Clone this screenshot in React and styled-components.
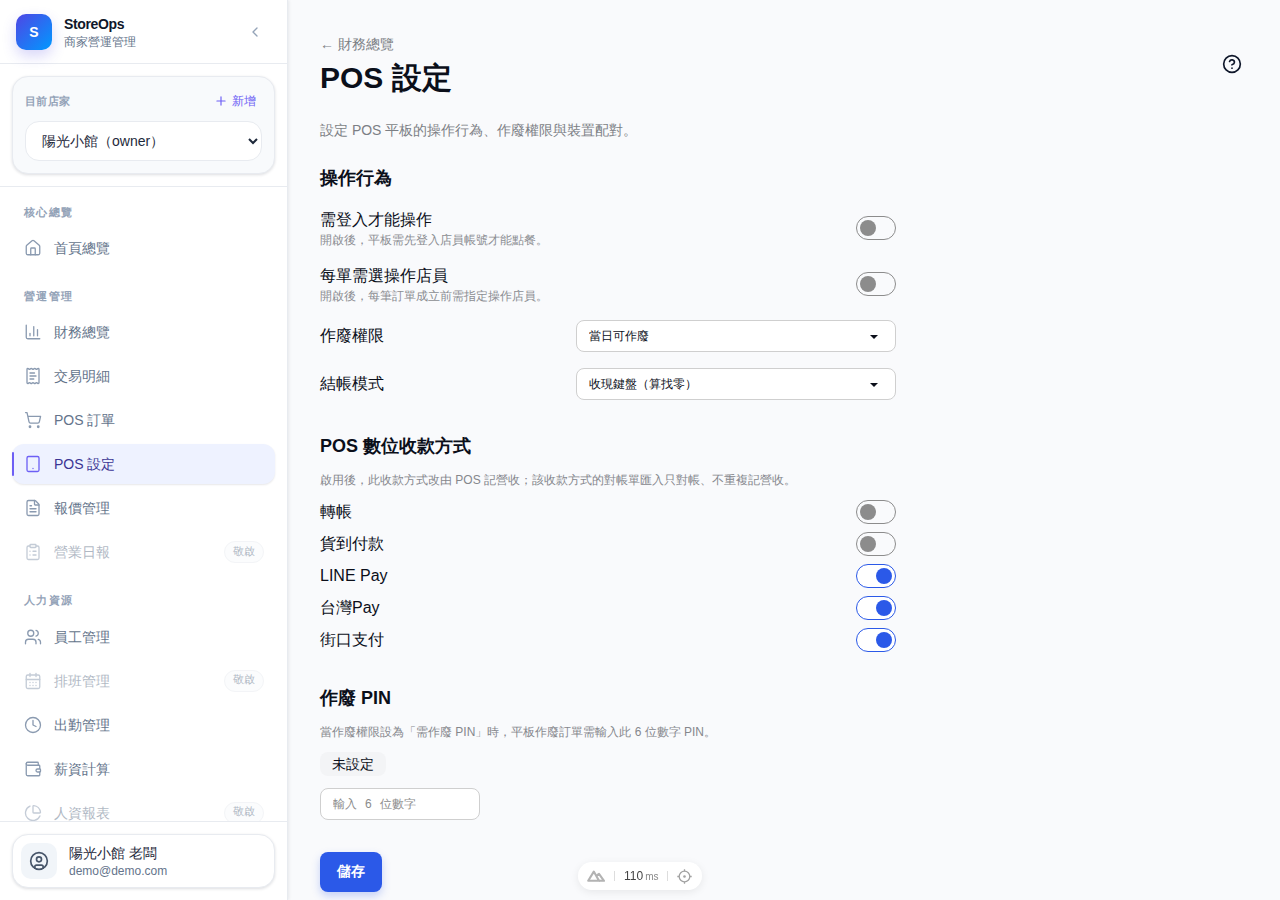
import styled, { createGlobalStyle } from "styled-components";
import {
  House,
  ChartColumn,
  ReceiptText,
  ShoppingCart,
  Tablet,
  FileText,
  ClipboardList,
  Users,
  CalendarDays,
  Clock,
  Wallet,
  ChartPie,
  CircleUser,
  CircleHelp,
  ChevronLeft,
  Plus,
} from "lucide-react";

const GlobalStyle = createGlobalStyle`
  * { box-sizing: border-box; }
  html, body { margin: 0; height: 100%; overflow: hidden; }
  body {
    font-family: "Liberation Sans", sans-serif;
    background: #f9fafc;
    color: #0b0f1a;
  }
`;

const Layout = styled.div`
  display: flex;
  height: 100vh;
`;

const Sidebar = styled.aside`
  width: 288px;
  flex-shrink: 0;
  display: flex;
  flex-direction: column;
  background: #fff;
  border-right: 1px solid #e8ebf0;
  box-shadow: 1px 0 3px rgba(15, 23, 42, 0.08);
  z-index: 2;
`;

const Brand = styled.div`
  height: 64px;
  flex-shrink: 0;
  display: flex;
  align-items: center;
  gap: 12px;
  padding: 0 16px;
  border-bottom: 1px solid #e8ebf0;
`;

const Logo = styled.div`
  width: 36px;
  height: 36px;
  border-radius: 10px;
  display: flex;
  align-items: center;
  justify-content: center;
  color: #fff;
  font-size: 14px;
  font-weight: 700;
  background: linear-gradient(135deg, #4f46e5, #0099ff);
  box-shadow: 0 6px 14px rgba(79, 70, 229, 0.22);
`;

const BrandText = styled.div`
  flex: 1;
  min-width: 0;
  padding-top: 2px;
`;

const BrandName = styled.div`
  font-size: 14px;
  line-height: 18px;
  font-weight: 700;
  letter-spacing: -0.35px;
  color: #0f172a;
`;

const BrandSub = styled.div`
  font-size: 12px;
  line-height: 18px;
  color: #64748b;
`;

const Collapse = styled.button`
  width: 24px;
  height: 24px;
  margin-right: 4px;
  padding: 0;
  border: none;
  background: none;
  color: #94a3b8;
  display: flex;
  align-items: center;
  justify-content: center;
`;

const StoreArea = styled.div`
  height: 123px;
  flex-shrink: 0;
  padding: 12px;
  border-bottom: 1px solid #e8ebf0;
`;

const StoreCard = styled.div`
  height: 98px;
  padding: 12px;
  background: #f8fafc;
  border: 1px solid #e8ebf0;
  border-radius: 16px;
  box-shadow: 0 1px 3px rgba(15, 23, 42, 0.14);
`;

const StoreHead = styled.div`
  height: 24px;
  display: flex;
  align-items: center;
  justify-content: space-between;
  padding-right: 6px;
  margin-bottom: 8px;
`;

const StoreLabel = styled.span`
  font-size: 11px;
  font-weight: 700;
  letter-spacing: 0.3px;
  color: #94a3b8;
`;

const AddStore = styled.button`
  display: flex;
  align-items: center;
  gap: 4px;
  padding: 0;
  border: none;
  background: none;
  font-family: inherit;
  font-size: 12px;
  color: #6d5ff5;
`;

const StoreSelect = styled.select`
  width: 100%;
  height: 40px;
  padding: 0 12px;
  border: 1px solid #e8ebf0;
  border-radius: 14px;
  background: #fff;
  font-family: inherit;
  font-size: 14px;
  color: #1e293b;
`;

const Nav = styled.nav`
  flex: 1;
  min-height: 0;
  overflow: hidden;
  padding: 17px 12px 0;
`;

const Group = styled.div`
  margin-bottom: 20px;
`;

const GroupLabel = styled.div`
  height: 16.2px;
  margin-bottom: 8px;
  padding-left: 12px;
  font-size: 11px;
  line-height: 17px;
  font-weight: 700;
  letter-spacing: 1.3px;
  color: #94a3b8;
`;

const NavItem = styled.a`
  position: relative;
  height: 40px;
  margin-bottom: 4px;
  display: flex;
  align-items: center;
  gap: 12px;
  padding: 0 11px 0 12px;
  border-radius: 12px;
  font-size: 14px;
  color: ${(p) => (p.$active ? "#3b3594" : "#64748b")};
  background: ${(p) => (p.$active ? "#eef2ff" : "transparent")};
  box-shadow: ${(p) => (p.$active ? "0 1px 2px rgba(15, 23, 42, 0.1)" : "none")};
  opacity: ${(p) => (p.$disabled ? 0.5 : 1)};

  svg {
    flex-shrink: 0;
    color: ${(p) => (p.$active ? "#6d5ff5" : "#8a9ab0")};
  }
`;

const ActiveMark = styled.span`
  position: absolute;
  left: 0;
  top: 8px;
  bottom: 8px;
  width: 2px;
  background: #6d5ff5;
  border-radius: 2px;
`;

const NavText = styled.span`
  flex: 1;
  padding-top: 2px;
`;

const Soon = styled.span`
  height: 22px;
  padding: 0 8px 2px;
  display: flex;
  align-items: center;
  border: 1px solid #e8ebf0;
  border-radius: 11px;
  background: #f8fafc;
  font-size: 11px;
  color: #64748b;
`;

const UserArea = styled.div`
  height: 79px;
  flex-shrink: 0;
  padding: 12px;
  border-top: 1px solid #e8ebf0;
  background: #fff;
`;

const UserCard = styled.div`
  height: 54px;
  display: flex;
  align-items: center;
  gap: 12px;
  padding: 0 8px;
  border: 1px solid #e8ebf0;
  border-radius: 16px;
  background: #fff;
  box-shadow: 0 1px 3px rgba(15, 23, 42, 0.14);
`;

const Avatar = styled.div`
  width: 36px;
  height: 36px;
  border-radius: 10px;
  background: #f1f5f9;
  color: #475569;
  display: flex;
  align-items: center;
  justify-content: center;
`;

const UserName = styled.div`
  font-size: 14px;
  line-height: 20px;
  color: #1e293b;
`;

const UserMail = styled.div`
  font-size: 12px;
  line-height: 16px;
  color: #64748b;
`;

const Main = styled.main`
  flex: 1;
  min-width: 0;
  overflow: hidden;
  padding: 36px 32px 0;
`;

const PageHead = styled.header`
  display: flex;
  justify-content: space-between;
  align-items: flex-start;
`;

const BackLink = styled.a`
  display: block;
  font-size: 14px;
  line-height: 17px;
  color: #7c7f85;
`;

const Title = styled.h1`
  margin: 5px 0 0;
  font-size: 30px;
  line-height: 40px;
  font-weight: 700;
  color: #0b0f1a;
`;

const HelpButton = styled.button`
  width: 20px;
  height: 20px;
  margin: 18px 6px 0 0;
  padding: 0;
  border: none;
  background: none;
  color: #0f172a;
`;

const Intro = styled.p`
  margin: 24px 0 0;
  font-size: 14px;
  line-height: 17px;
  color: #7c7f85;
`;

const Form = styled.div`
  width: 576px;
`;

const Section = styled.section`
  margin-top: ${(p) => p.$top}px;
`;

const SectionTitle = styled.h2`
  margin: 0;
  font-size: 18px;
  line-height: 28px;
  font-weight: 700;
  color: #0b0f1a;
`;

const SectionNote = styled.p`
  margin: 12px 0 0;
  font-size: 12px;
  line-height: 16px;
  color: #85878c;
`;

const Stack = styled.div`
  margin-top: ${(p) => p.$top}px;
  display: flex;
  flex-direction: column;
  gap: ${(p) => p.$gap}px;
`;

const Row = styled.div`
  display: flex;
  align-items: center;
  justify-content: space-between;
`;

const RowLabel = styled.div`
  font-size: 16px;
  line-height: 24px;
  color: #0b0f1a;
`;

const RowHint = styled.div`
  font-size: 12px;
  line-height: 16px;
  color: #8b8d92;
`;

const Toggle = styled.span`
  position: relative;
  width: 40px;
  height: 24px;
  flex-shrink: 0;
  border-radius: 12px;
  border: 1px solid ${(p) => (p.$on ? "#2b59e8" : "#8c8c8c")};
  background: ${(p) => (p.$on ? "#fff" : "transparent")};

  &::after {
    content: "";
    position: absolute;
    top: 3px;
    left: ${(p) => (p.$on ? "19px" : "3px")};
    width: 16px;
    height: 16px;
    border-radius: 50%;
    background: ${(p) => (p.$on ? "#2b59e8" : "#8c8c8c")};
  }
`;

const SelectWrap = styled.div`
  position: relative;
  width: 320px;

  &::after {
    content: "";
    position: absolute;
    right: 18px;
    top: 15px;
    border-left: 4px solid transparent;
    border-right: 4px solid transparent;
    border-top: 4px solid #0b0f1a;
    pointer-events: none;
  }
`;

const Select = styled.select`
  display: block;
  width: 100%;
  height: 32px;
  padding: 0 12px;
  appearance: none;
  border: 1px solid #cfcfcf;
  border-radius: 8px;
  background: #fff;
  font-family: inherit;
  font-size: 12px;
  color: #0b0f1a;
`;

const PinBadge = styled.div`
  width: fit-content;
  height: 24px;
  margin-top: 12px;
  padding: 2px 12px 0;
  display: flex;
  align-items: center;
  border-radius: 8px;
  background: #f3f4f6;
  font-size: 14px;
  color: #0b0f1a;
`;

const PinInput = styled.input`
  display: block;
  width: 160px;
  height: 32px;
  margin-top: 12px;
  padding: 0 12px;
  border: 1px solid #cfcfcf;
  border-radius: 8px;
  background: #fff;
  font-family: inherit;
  font-size: 12px;

  &::placeholder {
    color: #8b8b8b;
    word-spacing: 4.7px;
  }
`;

const SaveButton = styled.button`
  display: block;
  width: 62px;
  height: 40px;
  margin-top: 32px;
  border: none;
  border-radius: 8px;
  background: #2b59e8;
  color: #fff;
  font-family: inherit;
  font-size: 14px;
  font-weight: 700;
  box-shadow: 0 4px 8px rgba(43, 89, 232, 0.25);
`;

const DevPill = styled.div`
  position: fixed;
  left: 578px;
  top: 862px;
  width: 124px;
  height: 28px;
  display: flex;
  align-items: center;
  gap: 9px;
  padding: 0 9px;
  border-radius: 14px;
  background: #fff;
  box-shadow: 0 2px 8px rgba(0, 0, 0, 0.08);
  z-index: 5;
`;

const DevDivider = styled.span`
  width: 1px;
  height: 10px;
  background: #ddd;
`;

const DevTime = styled.span`
  font-size: 12px;
  white-space: nowrap;
  color: #444;

  small {
    margin-left: 2px;
    font-size: 10px;
    color: #888;
  }
`;

const navGroups = [
  {
    label: "核心總覽",
    items: [{ label: "首頁總覽", icon: House }],
  },
  {
    label: "營運管理",
    items: [
      { label: "財務總覽", icon: ChartColumn },
      { label: "交易明細", icon: ReceiptText },
      { label: "POS 訂單", icon: ShoppingCart },
      { label: "POS 設定", icon: Tablet, active: true },
      { label: "報價管理", icon: FileText },
      { label: "營業日報", icon: ClipboardList, soon: true },
    ],
  },
  {
    label: "人力資源",
    items: [
      { label: "員工管理", icon: Users },
      { label: "排班管理", icon: CalendarDays, soon: true },
      { label: "出勤管理", icon: Clock },
      { label: "薪資計算", icon: Wallet },
      { label: "人資報表", icon: ChartPie, soon: true },
    ],
  },
];

const payments = [
  { label: "轉帳", on: false },
  { label: "貨到付款", on: false },
  { label: "LINE Pay", on: true },
  { label: "台灣Pay", on: true },
  { label: "街口支付", on: true },
];

function MountainLogo() {
  return (
    <svg width="18" height="12" viewBox="0 0 18 12" fill="none" stroke="#b3b3b3" strokeWidth="2.1" strokeLinejoin="round">
      <path d="M1.2 10.8 L6.8 1.6 L12 10.8 Z" />
      <path d="M9.5 5.6 L12 3.8 L17 10.8 H12" />
    </svg>
  );
}

function TargetIcon() {
  return (
    <svg width="15" height="15" viewBox="0 0 15 15" fill="none" stroke="#a3a3a3" strokeWidth="1.3">
      <circle cx="7.5" cy="7.5" r="5.3" />
      <circle cx="7.5" cy="7.5" r="1.3" fill="#a3a3a3" stroke="none" />
      <path d="M7.5 0.3V2.3M7.5 12.7V14.7M0.3 7.5H2.3M12.7 7.5H14.7" />
    </svg>
  );
}

export default function App() {
  return (
    <>
      <GlobalStyle />
      <Layout>
        <Sidebar>
          <Brand>
            <Logo>S</Logo>
            <BrandText>
              <BrandName>StoreOps</BrandName>
              <BrandSub>商家營運管理</BrandSub>
            </BrandText>
            <Collapse>
              <ChevronLeft size={16} />
            </Collapse>
          </Brand>

          <StoreArea>
            <StoreCard>
              <StoreHead>
                <StoreLabel>目前店家</StoreLabel>
                <AddStore>
                  <Plus size={14} />
                  新增
                </AddStore>
              </StoreHead>
              <StoreSelect defaultValue="sun">
                <option value="sun">陽光小館（owner）</option>
              </StoreSelect>
            </StoreCard>
          </StoreArea>

          <Nav>
            {navGroups.map((group) => (
              <Group key={group.label}>
                <GroupLabel>{group.label}</GroupLabel>
                {group.items.map((item) => (
                  <NavItem key={item.label} $active={item.active} $disabled={item.soon}>
                    {item.active && <ActiveMark />}
                    <item.icon size={18} strokeWidth={1.75} />
                    <NavText>{item.label}</NavText>
                    {item.soon && <Soon>敬啟</Soon>}
                  </NavItem>
                ))}
              </Group>
            ))}
          </Nav>

          <UserArea>
            <UserCard>
              <Avatar>
                <CircleUser size={20} />
              </Avatar>
              <div>
                <UserName>陽光小館 老闆</UserName>
                <UserMail>demo@demo.com</UserMail>
              </div>
            </UserCard>
          </UserArea>
        </Sidebar>

        <Main>
          <PageHead>
            <div>
              <BackLink>← 財務總覽</BackLink>
              <Title>POS 設定</Title>
            </div>
            <HelpButton>
              <CircleHelp size={20} />
            </HelpButton>
          </PageHead>
          <Intro>設定 POS 平板的操作行為、作廢權限與裝置配對。</Intro>

          <Form>
            <Section $top={25}>
              <SectionTitle>操作行為</SectionTitle>
              <Stack $top={16} $gap={16}>
                <Row>
                  <div>
                    <RowLabel>需登入才能操作</RowLabel>
                    <RowHint>開啟後，平板需先登入店員帳號才能點餐。</RowHint>
                  </div>
                  <Toggle />
                </Row>
                <Row>
                  <div>
                    <RowLabel>每單需選操作店員</RowLabel>
                    <RowHint>開啟後，每筆訂單成立前需指定操作店員。</RowHint>
                  </div>
                  <Toggle />
                </Row>
                <Row>
                  <RowLabel>作廢權限</RowLabel>
                  <SelectWrap>
                    <Select defaultValue="today">
                      <option value="today">當日可作廢</option>
                    </Select>
                  </SelectWrap>
                </Row>
                <Row>
                  <RowLabel>結帳模式</RowLabel>
                  <SelectWrap>
                    <Select defaultValue="cash">
                      <option value="cash">收現鍵盤（算找零）</option>
                    </Select>
                  </SelectWrap>
                </Row>
              </Stack>
            </Section>

            <Section $top={32}>
              <SectionTitle>POS 數位收款方式</SectionTitle>
              <SectionNote>啟用後，此收款方式改由 POS 記營收；該收款方式的對帳單匯入只對帳、不重複記營收。</SectionNote>
              <Stack $top={12} $gap={8}>
                {payments.map((pay) => (
                  <Row key={pay.label}>
                    <RowLabel>{pay.label}</RowLabel>
                    <Toggle $on={pay.on} />
                  </Row>
                ))}
              </Stack>
            </Section>

            <Section $top={32}>
              <SectionTitle>作廢 PIN</SectionTitle>
              <SectionNote>當作廢權限設為「需作廢 PIN」時，平板作廢訂單需輸入此 6 位數字 PIN。</SectionNote>
              <PinBadge>未設定</PinBadge>
              <PinInput placeholder="輸入 6 位數字" />
              <SaveButton>儲存</SaveButton>
            </Section>
          </Form>
        </Main>
      </Layout>

      <DevPill>
        <MountainLogo />
        <DevDivider />
        <DevTime>
          110<small>ms</small>
        </DevTime>
        <DevDivider />
        <TargetIcon />
      </DevPill>
    </>
  );
}
